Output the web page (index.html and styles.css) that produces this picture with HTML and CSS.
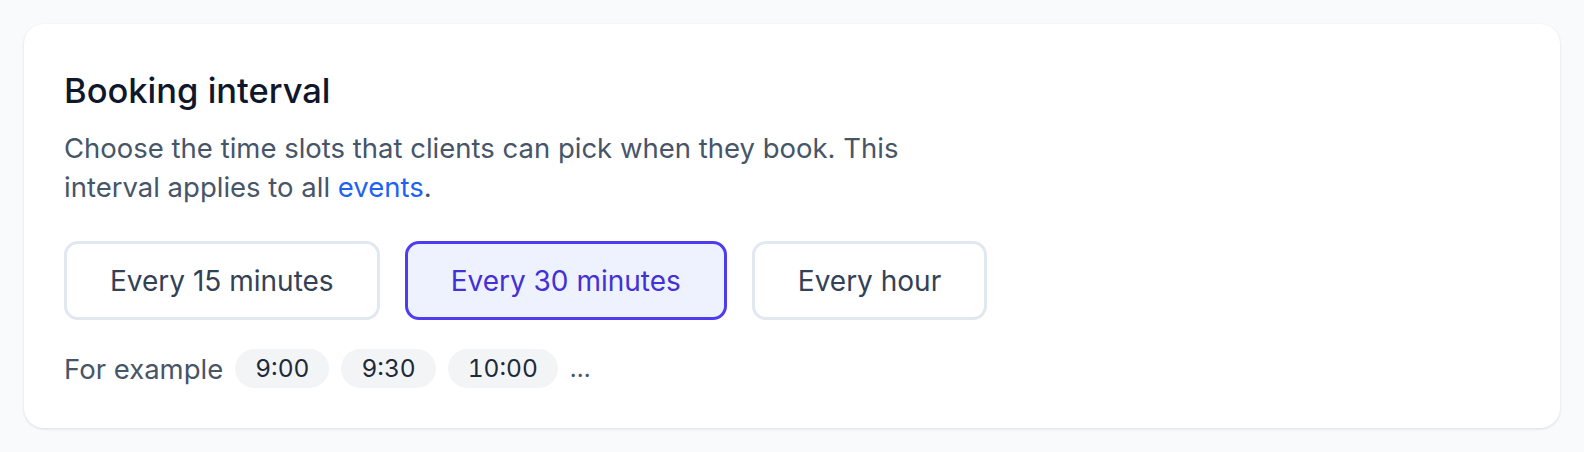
FILE: index.html
```html
<!DOCTYPE html>
<html lang="en">
<head>
    <meta charset="UTF-8">
    <meta name="viewport" content="width=device-width, initial-scale=1.0">
    <title>Booking interval</title>
    <link rel="stylesheet" href="styles.css">
</head>
<body>
    <div class="card">
        <h2 class="title">Booking interval</h2>
        <p class="desc">Choose the time slots that clients can pick when they book. This interval applies to all <a href="#" class="link">events</a>.</p>

        <div class="options">
            <button class="option">Every 15 minutes</button>
            <button class="option selected">Every 30 minutes</button>
            <button class="option">Every hour</button>
        </div>

        <div class="example">
            <span class="example-label">For example</span>
            <span class="chip">9:00</span>
            <span class="chip">9:30</span>
            <span class="chip">10:00</span>
            <span class="more">...</span>
        </div>
    </div>
</body>
</html>
```

FILE: styles.css
```css
body {
    margin: 0;
    padding: 24px;
    background-color: #f8fafc;
    font-family: 'Inter', 'Noto Sans', sans-serif;
}

.card {
    background-color: white;
    border-radius: 20px;
    padding: 40px;
    box-shadow: 0 1px 3px rgba(15, 23, 42, 0.12);
}

.title {
    margin: 0;
    font-size: 34.5px;
    font-weight: 500;
    line-height: 54px;
    color: #0f172a;
}

.desc {
    margin: 11px 0 0;
    max-width: 880px;
    font-size: 27.5px;
    line-height: 39px;
    color: #475569;
}

.link {
    color: #1d62f5;
    text-decoration: none;
}

.options {
    display: flex;
    gap: 25px;
    margin-top: 34px;
}

.option {
    padding: 0 43px;
    height: 79px;
    border: 3px solid #e2e8f0;
    border-radius: 14px;
    background-color: white;
    font-family: inherit;
    font-size: 28px;
    color: #334155;
}

.option.selected {
    border-color: #4f3cf0;
    background-color: #eef2ff;
    color: #4330d6;
}

.example {
    display: flex;
    align-items: center;
    gap: 12px;
    margin-top: 29px;
    font-size: 27.5px;
    color: #475569;
}

.chip {
    height: 39px;
    line-height: 39px;
    padding: 0 20px;
    border-radius: 20px;
    background-color: #f3f4f6;
    color: #1e293b;
    font-size: 24.5px;
    font-variant-numeric: tabular-nums;
}

.more {
    font-size: 24px;
}
```
